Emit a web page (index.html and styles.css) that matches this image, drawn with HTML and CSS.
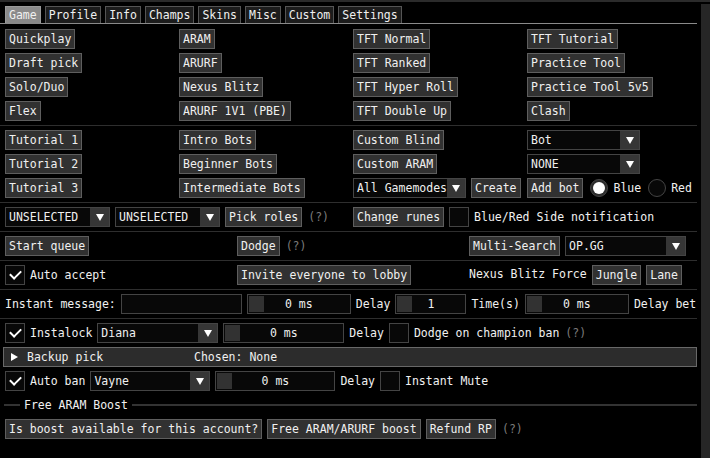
FILE: index.html
```html
<!DOCTYPE html>
<html lang="en">
<head>
    <meta charset="UTF-8">
    <meta name="viewport" content="width=device-width, initial-scale=1.0">
    <title>Game</title>
    <link rel="stylesheet" href="styles.css">
</head>
<body>
    <div class="topstrip"></div>
    <div class="app">
        <div class="main">
            <div class="tabbar">
                <span class="tab active">Game</span>
                <span class="tab">Profile</span>
                <span class="tab">Info</span>
                <span class="tab">Champs</span>
                <span class="tab">Skins</span>
                <span class="tab">Misc</span>
                <span class="tab">Custom</span>
                <span class="tab">Settings</span>
            </div>
            <div class="content">
                <div class="grid4">
                    <div class="cell"><span class="btn">Quickplay</span></div>
                    <div class="cell"><span class="btn">ARAM</span></div>
                    <div class="cell"><span class="btn">TFT Normal</span></div>
                    <div class="cell"><span class="btn">TFT Tutorial</span></div>
                    <div class="cell"><span class="btn">Draft pick</span></div>
                    <div class="cell"><span class="btn">ARURF</span></div>
                    <div class="cell"><span class="btn">TFT Ranked</span></div>
                    <div class="cell"><span class="btn">Practice Tool</span></div>
                    <div class="cell"><span class="btn">Solo/Duo</span></div>
                    <div class="cell"><span class="btn">Nexus Blitz</span></div>
                    <div class="cell"><span class="btn">TFT Hyper Roll</span></div>
                    <div class="cell"><span class="btn">Practice Tool 5v5</span></div>
                    <div class="cell"><span class="btn">Flex</span></div>
                    <div class="cell"><span class="btn">ARURF 1V1 (PBE)</span></div>
                    <div class="cell"><span class="btn">TFT Double Up</span></div>
                    <div class="cell"><span class="btn">Clash</span></div>
                </div>
                <div class="sep"></div>
                <div class="grid4">
                    <div class="cell"><span class="btn">Tutorial 1</span></div>
                    <div class="cell"><span class="btn">Intro Bots</span></div>
                    <div class="cell"><span class="btn">Custom Blind</span></div>
                    <div class="cell"><span class="combo w113">Bot<i class="arrow"></i></span></div>
                    <div class="cell"><span class="btn">Tutorial 2</span></div>
                    <div class="cell"><span class="btn">Beginner Bots</span></div>
                    <div class="cell"><span class="btn">Custom ARAM</span></div>
                    <div class="cell"><span class="combo w113">NONE<i class="arrow"></i></span></div>
                    <div class="cell"><span class="btn">Tutorial 3</span></div>
                    <div class="cell"><span class="btn">Intermediate Bots</span></div>
                    <div class="cell">
                        <span class="combo w113">All Gamemodes<i class="arrow"></i></span>
                        <span class="btn">Create</span>
                    </div>
                    <div class="cell">
                        <span class="btn">Add bot</span>
                        <span class="radio on"></span><span class="label">Blue</span>
                        <span class="radio"></span><span class="label">Red</span>
                    </div>
                </div>
                <div class="sep"></div>
                <div class="grid4">
                    <div class="cell span2">
                        <span class="combo w105">UNSELECTED<i class="arrow"></i></span>
                        <span class="combo w105">UNSELECTED<i class="arrow"></i></span>
                        <span class="btn">Pick roles</span>
                        <span class="help">(?)</span>
                    </div>
                    <div class="cell span2">
                        <span class="btn">Change runes</span>
                        <span class="chk"></span>
                        <span class="label">Blue/Red Side notification</span>
                    </div>
                </div>
                <div class="sep"></div>
                <div class="grid3">
                    <div class="cell"><span class="btn">Start queue</span></div>
                    <div class="cell"><span class="btn">Dodge</span><span class="help">(?)</span></div>
                    <div class="cell">
                        <span class="btn">Multi-Search</span>
                        <span class="combo w121">OP.GG<i class="arrow"></i></span>
                    </div>
                </div>
                <div class="sep"></div>
                <div class="grid3">
                    <div class="cell"><span class="chk on"></span><span class="label">Auto accept</span></div>
                    <div class="cell"><span class="btn">Invite everyone to lobby</span></div>
                    <div class="cell">
                        <span class="label top">Nexus Blitz Force</span>
                        <span class="btn">Jungle</span>
                        <span class="btn">Lane</span>
                    </div>
                </div>
                <div class="sep"></div>
                <div class="row">
                    <span class="label">Instant message:</span>
                    <span class="input w121"></span>
                    <span class="slider w104">0 ms</span>
                    <span class="label">Delay</span>
                    <span class="slider w71">1</span>
                    <span class="label">Time(s)</span>
                    <span class="slider w104">0 ms</span>
                    <span class="label">Delay bet</span>
                </div>
                <div class="sep"></div>
                <div class="row">
                    <span class="chk on"></span>
                    <span class="label">Instalock</span>
                    <span class="combo w121">Diana<i class="arrow"></i></span>
                    <span class="slider w121">0 ms</span>
                    <span class="label">Delay</span>
                    <span class="chk"></span>
                    <span class="label">Dodge on champion ban</span>
                    <span class="help">(?)</span>
                </div>
                <div class="header">
                    <i class="tri"></i>
                    <span class="hd-title">Backup pick</span>
                    <span>Chosen: None</span>
                </div>
                <div class="row">
                    <span class="chk on"></span>
                    <span class="label">Auto ban</span>
                    <span class="combo w120">Vayne<i class="arrow"></i></span>
                    <span class="slider w120">0 ms</span>
                    <span class="label">Delay</span>
                    <span class="chk"></span>
                    <span class="label">Instant Mute</span>
                </div>
                <div class="septext">
                    <span class="line short"></span>
                    <span>Free ARAM Boost</span>
                    <span class="line"></span>
                </div>
                <div class="row">
                    <span class="btn">Is boost available for this account?</span>
                    <span class="btn">Free ARAM/ARURF boost</span>
                    <span class="btn">Refund RP</span>
                    <span class="help">(?)</span>
                </div>
            </div>
        </div>
        <div class="scrollbar"></div>
    </div>
</body>
</html>
```

FILE: styles.css
```css
*{
    margin: 0;
    padding: 0;
    box-sizing: border-box;
}
body{
    background: #000;
    color: #f0f0f0;
    font-family: "DejaVu Sans Mono", "Liberation Mono", monospace;
    font-size: 11.5px;
    width: 710px;
    height: 458px;
    overflow: hidden;
}
.topstrip{
    height: 2px;
    background: #2b2b2b;
}
.app{
    display: flex;
    height: 456px;
}
.main{
    width: 697px;
    overflow: hidden;
}
.scrollbar{
    width: 9px;
    margin: 2px 0 0 4px;
    background: #262626;
}

/* tabs */
.tabbar{
    display: flex;
    gap: 4px;
    padding: 4px 0 0 5px;
    height: 22px;
    border-bottom: 1px solid #8a8a8a;
}
.tab{
    height: 17px;
    line-height: 17px;
    padding: 0 3px;
    background: #1c1c1c;
    border: 1px solid #555;
    border-bottom: none;
    white-space: pre;
}
.tab.active{
    background: #8a8a8a;
    border-color: #9a9a9a;
}

.content{
    display: flex;
    flex-direction: column;
    gap: 4px;
    padding: 5px 0 0 5px;
}
.grid4{
    display: grid;
    grid-template-columns: repeat(4, 174px);
    row-gap: 4px;
}
.grid3{
    display: grid;
    grid-template-columns: 232px 232px 228px;
}
.span2{
    grid-column: span 2;
}
.cell, .row{
    display: flex;
    align-items: center;
    gap: 5px;
    height: 20px;
    white-space: pre;
}
.row{
    overflow: hidden;
}
.sep{
    height: 1px;
    margin-left: -5px;
    background: #2e2e2e;
}

/* widgets */
.btn{
    height: 20px;
    line-height: 18px;
    padding: 0 3px;
    background: #313131;
    border: 1px solid #5e5e5e;
    white-space: pre;
    flex-shrink: 0;
}
.label{
    flex-shrink: 0;
}
.label.top{
    align-self: flex-start;
    margin-top: 2px;
}
.help{
    color: #7a7a7a;
    margin-left: 1px;
}
.combo, .slider, .input{
    height: 20px;
    line-height: 18px;
    background: #080808;
    border: 1px solid #444;
    flex-shrink: 0;
}
.combo{
    display: flex;
    justify-content: space-between;
    padding-left: 3px;
}
.arrow{
    width: 19px;
    height: 18px;
    background: #363636;
    display: flex;
    align-items: center;
    justify-content: center;
}
.arrow::after{
    content: "";
    border-left: 4px solid transparent;
    border-right: 4px solid transparent;
    border-top: 7px solid #fff;
}
.slider{
    position: relative;
    text-align: center;
}
.slider::before{
    content: "";
    position: absolute;
    left: 1px;
    top: 1px;
    width: 15px;
    height: 16px;
    background: #323232;
}
.chk{
    width: 20px;
    height: 20px;
    background: #080808;
    border: 1px solid #444;
    flex-shrink: 0;
    display: flex;
    align-items: center;
    justify-content: center;
}
.chk.on::after{
    content: "";
    width: 9px;
    height: 5px;
    border-left: 2px solid #fff;
    border-bottom: 2px solid #fff;
    transform: translateY(-2px) rotate(-45deg);
}
.radio{
    width: 18px;
    height: 18px;
    border-radius: 50%;
    background: #080808;
    border: 1px solid #444;
    flex-shrink: 0;
    margin-left: 2px;
    display: flex;
    align-items: center;
    justify-content: center;
}
.radio.on{
    background: #2c2c2c;
}
.radio.on::after{
    content: "";
    width: 12px;
    height: 12px;
    border-radius: 50%;
    background: #fff;
}
.w71{ width: 71px; }
.w104{ width: 104px; }
.w105{ width: 105px; }
.w113{ width: 113px; }
.w120{ width: 120px; }
.w121{ width: 121px; }

.header{
    display: flex;
    align-items: center;
    height: 20px;
    margin-left: -2px;
    background: #2c2c2c;
    border: 1px solid #686868;
    white-space: pre;
}
.tri{
    margin: 0 9px 0 7px;
    border-top: 4px solid transparent;
    border-bottom: 4px solid transparent;
    border-left: 7px solid #fff;
}
.hd-title{
    width: 167px;
}
.septext{
    display: flex;
    align-items: center;
    gap: 4px;
    height: 20px;
    margin-left: -1px;
    white-space: pre;
}
.line{
    flex: 1;
    height: 2px;
    background: #333;
}
.line.short{
    flex: none;
    width: 16px;
}
```
